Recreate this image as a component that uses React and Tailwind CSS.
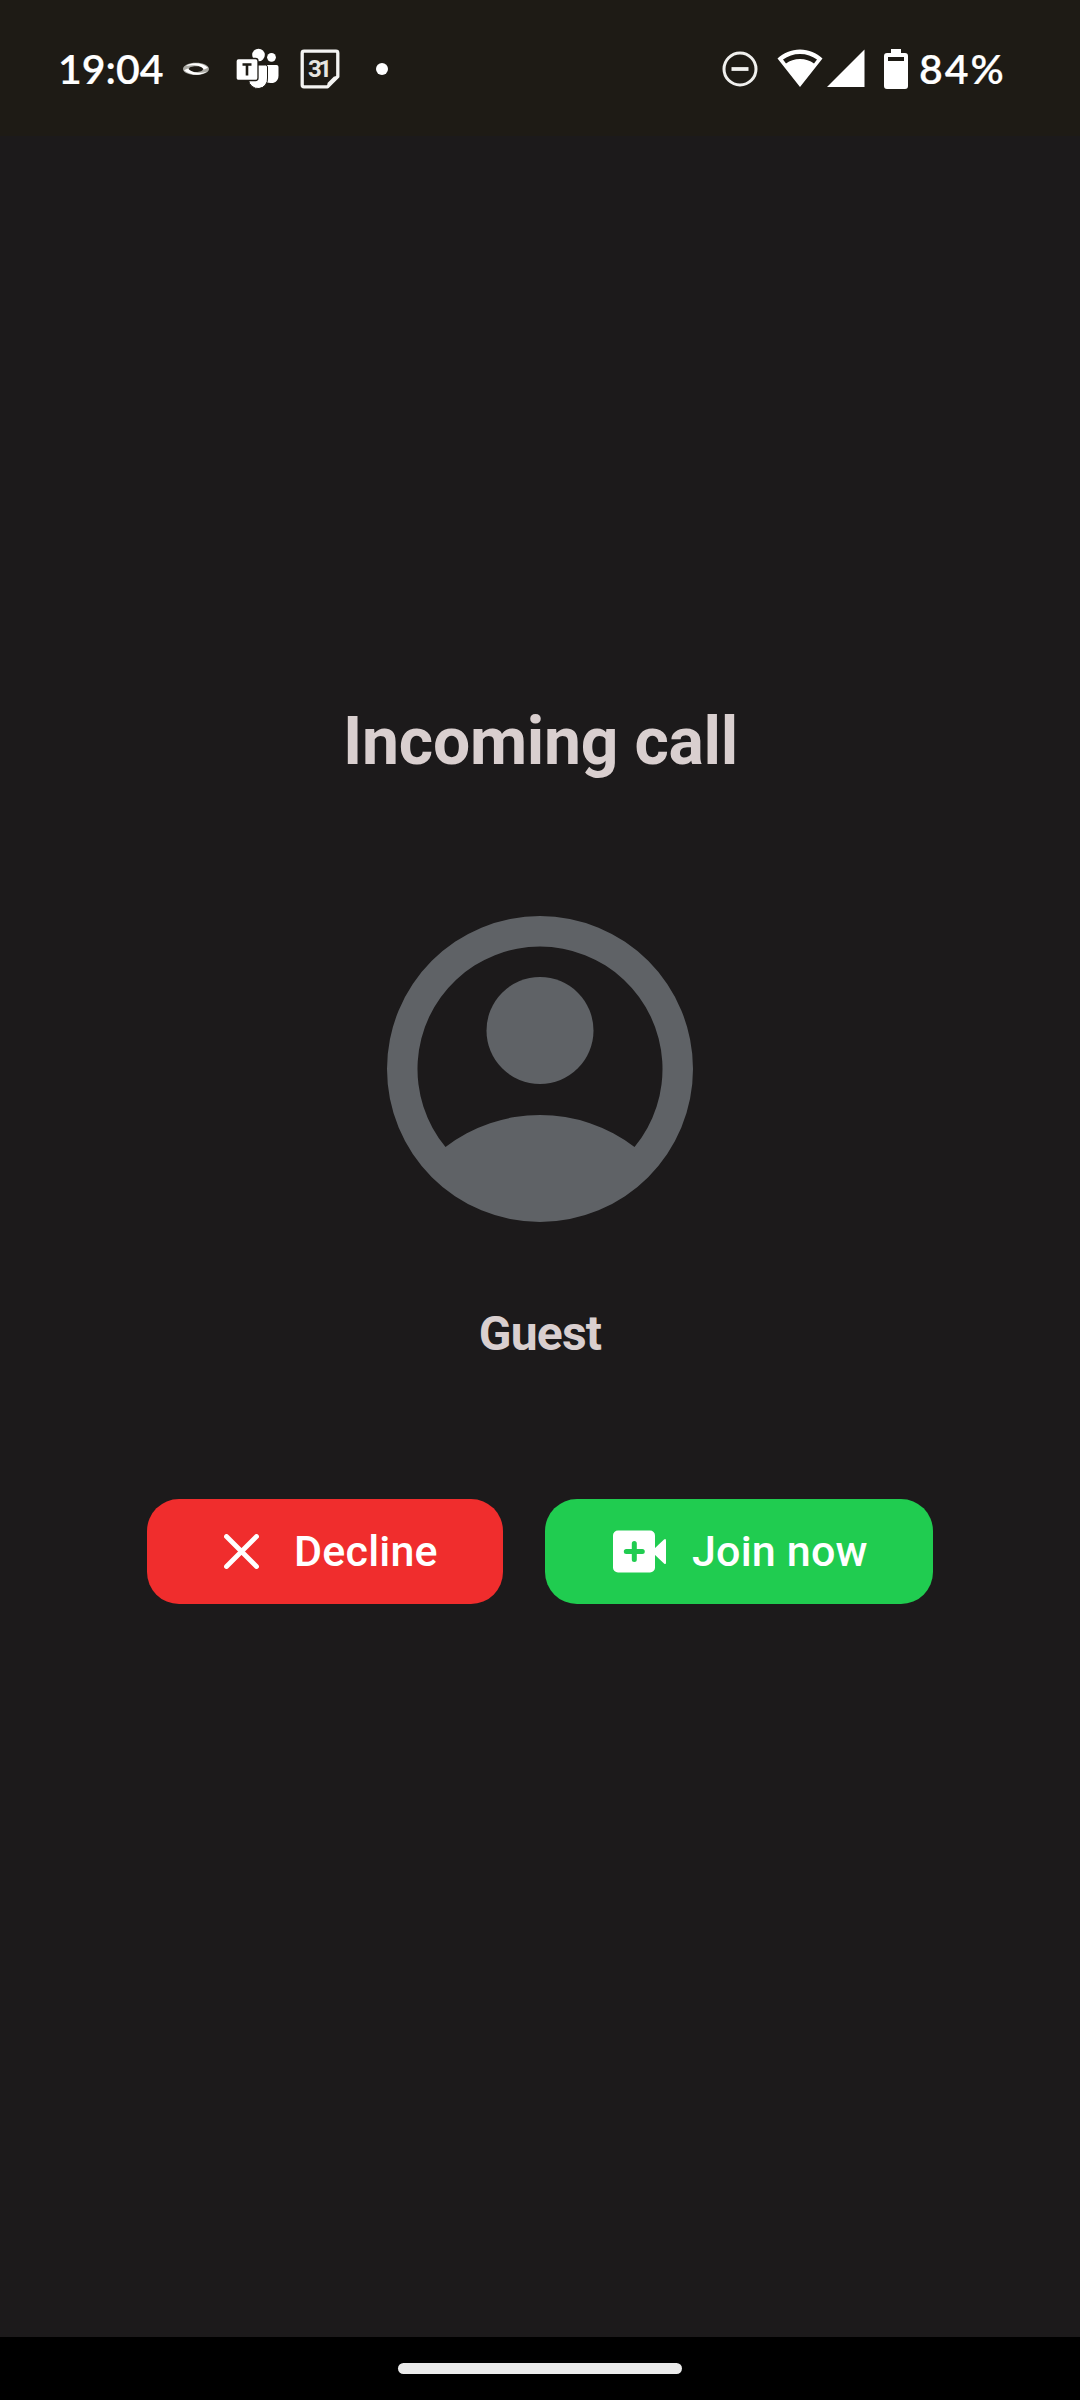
function RingIcon() {
  return (
    <svg className="ml-[18px] h-[14px] w-[28px]" viewBox="0 0 28 14">
      <path
        fillRule="evenodd"
        fill="#a9a8a2"
        d="M14 .8C21 .8 27 3.500 27 7S21 13 14 13S1 10.500 1 7S7 .8 14 .8ZM14 4.200C10 4.200 7 5.200 7 7S10 10 14 10S21 9 21 7S18 4.200 14 4.200Z"
      />
      <path d="M4 4C9 0 20 .2 26 5.800L22 7.500C19 3.200 11 2.600 4 4Z" fill="#fff" />
      <path d="M25 9.500C20 14 8 13.800 2 8.200L6 6.500C9 10.800 19 12 25 9.500Z" fill="#fff" />
    </svg>
  );
}

function TeamsIcon() {
  return (
    <svg className="ml-[26px] h-[42px] w-[44px]" viewBox="0 0 44 42">
      <circle cx="22.500" cy="7" r="6.300" fill="#fff" />
      <circle cx="35.500" cy="9.300" r="4.400" fill="#fff" />
      <path d="M31 17h9.500a2 2 0 0 1 2 2v8.500c0 5-3.500 8-8 7.500l-3.500-.5z" fill="#fff" />
      <path d="M15 17h14.500a2 2 0 0 1 2 2v11a9.500 9.500 0 0 1-19 2z" fill="#fff" stroke="#1e1b15" strokeWidth="1" />
      <rect x="0" y="10.500" width="22" height="22" rx="2.500" fill="#fff" stroke="#1e1b15" strokeWidth="1.300" />
      <path d="M6.500 16.500h9M11 16.500v11" stroke="#1e1b15" strokeWidth="2.600" fill="none" />
    </svg>
  );
}

function CalendarIcon() {
  return (
    <svg className="ml-[20px] h-[40px] w-[40px]" viewBox="0 0 40 40">
      <path d="M4 2.200H36Q37.800 2.200 37.800 4V27.500L27.500 37.800H4Q2.200 37.800 2.200 36V4Q2.200 2.200 4 2.200Z" fill="none" stroke="#f4f4f2" strokeWidth="3.300" strokeLinejoin="round" />
      <path d="M37.500 27.500L27.500 37.500V34L34 27.500Z" fill="#f4f4f2" />
      <text x="20" y="27.500" textAnchor="middle" fontSize="24" fontWeight="700" fontFamily="Roboto, sans-serif" fill="#e6e5e1" textLength="24">31</text>
    </svg>
  );
}

function StatusBar() {
  return (
    <header className="flex h-[136px] shrink-0 items-center bg-[#1e1b15] pl-[58px] pr-[74px] pt-[1px] text-white">
      <span className="w-[106px] whitespace-nowrap font-['Lato',sans-serif] text-[41px] font-semibold leading-[50px] [-webkit-text-stroke:0.2px_white]">19:04</span>
      <RingIcon />
      <TeamsIcon />
      <CalendarIcon />
      <span className="ml-[36px] mt-[1px] h-[12px] w-[12px] rounded-full bg-white" />
      <span className="flex-1" />
      <svg className="h-[36px] w-[36px]" viewBox="0 0 36 36" fill="none" stroke="#f0f0ee">
        <circle cx="18" cy="18" r="16" strokeWidth="3" />
        <path d="M9.500 18h17" strokeWidth="3.800" />
      </svg>
      <svg className="ml-[19px] h-[40px] w-[46px]" viewBox="0 0 46 40" fill="#fff">
        <path d="M23 .5C14 .5 6.500 4 .5 9.500L23 38L45.500 9.500C39.500 4 32 .5 23 .5ZM23 5C29.500 5 35 7 40 10.500L37 14.500C33 11.500 28.500 10 23 10S13 11.500 9 14.500L6 10.500C11 7 16.500 5 23 5Z" fillRule="evenodd" />
      </svg>
      <svg className="ml-[4px] h-[40px] w-[38px]" viewBox="0 0 38 40" fill="#fff">
        <path d="M0 38L37.500 .5V38Z" />
      </svg>
      <svg className="ml-[19px] h-[40px] w-[24px]" viewBox="0 0 24 40" fill="#fff">
        <path fillRule="evenodd" d="M7 0H17V4H21Q24 4 24 7V37Q24 40 21 40H3Q0 40 0 37V7Q0 4 3 4H7ZM4 8V12H20V8Z" />
      </svg>
      <span className="ml-[11px] w-[87px] whitespace-nowrap font-['Lato',sans-serif] text-[41px] font-semibold leading-[50px] tracking-[2px] [-webkit-text-stroke:0.2px_white]">84%</span>
    </header>
  );
}

function Avatar() {
  return (
    <svg className="mt-[134px] h-[306px] w-[306px]" viewBox="0 0 306 306" fill="#5f6266">
      <path
        fillRule="evenodd"
        d="M153 0A153 153 0 1 1 153 306A153 153 0 1 1 153 0ZM58.500 231A155.500 155.500 0 0 1 247.500 231A122.500 122.500 0 1 0 58.500 231Z"
      />
      <circle cx="153" cy="114.500" r="53.500" />
    </svg>
  );
}

export default function App() {
  return (
    <div className="flex h-[2400px] w-[1080px] flex-col overflow-hidden bg-[#1c1a1b] font-['Roboto',sans-serif]">
      <StatusBar />
      <main className="flex flex-1 flex-col items-center pt-[566px] text-[#d9cfcf]">
        <h1 className="whitespace-nowrap pl-[1px] text-[66px] font-bold leading-[80px] tracking-[-0.25px]">Incoming call</h1>
        <Avatar />
        <h2 className="mt-[84px] whitespace-nowrap text-[48px] font-bold leading-[56px] tracking-[-0.8px]">Guest</h2>
        <div className="mt-[137px] flex gap-[42px] text-[43px] font-medium text-white">
          <button className="flex h-[105px] w-[356px] items-center rounded-[32px] bg-[#f02d2d] pl-[77px]">
            <svg className="h-[35px] w-[35px]" viewBox="0 0 35 35" fill="none" stroke="#fff" strokeWidth="4.800" strokeLinecap="round">
              <path d="M2.500 2.500L32.500 32.500M32.500 2.500L2.500 32.500" />
            </svg>
            <span className="ml-[35px] whitespace-nowrap pb-[2px] leading-[52px] tracking-[0.2px]">Decline</span>
          </button>
          <button className="flex h-[105px] w-[388px] items-center rounded-[32px] bg-[#20cc50] pl-[68px]">
            <svg className="h-[43px] w-[53px]" viewBox="0 0 53 43">
              <rect y="0.500" width="42" height="42" rx="5" fill="#fff" />
              <path d="M41 19L51 9.500Q53 8 53 10.500V32.500Q53 35 51 33.500L41 24Z" fill="#fff" />
              <path d="M21.300 13.500V29.500M13.300 21.500H29.300" stroke="#20cc50" strokeWidth="5" strokeLinecap="round" />
            </svg>
            <span className="ml-[26px] whitespace-nowrap pb-[2px] leading-[52px] tracking-[0.2px]">Join now</span>
          </button>
        </div>
      </main>
      <footer className="flex h-[63px] shrink-0 justify-center bg-black pt-[26px]">
        <div className="h-[11px] w-[284px] rounded-full bg-[#ebebeb]" />
      </footer>
    </div>
  );
}
